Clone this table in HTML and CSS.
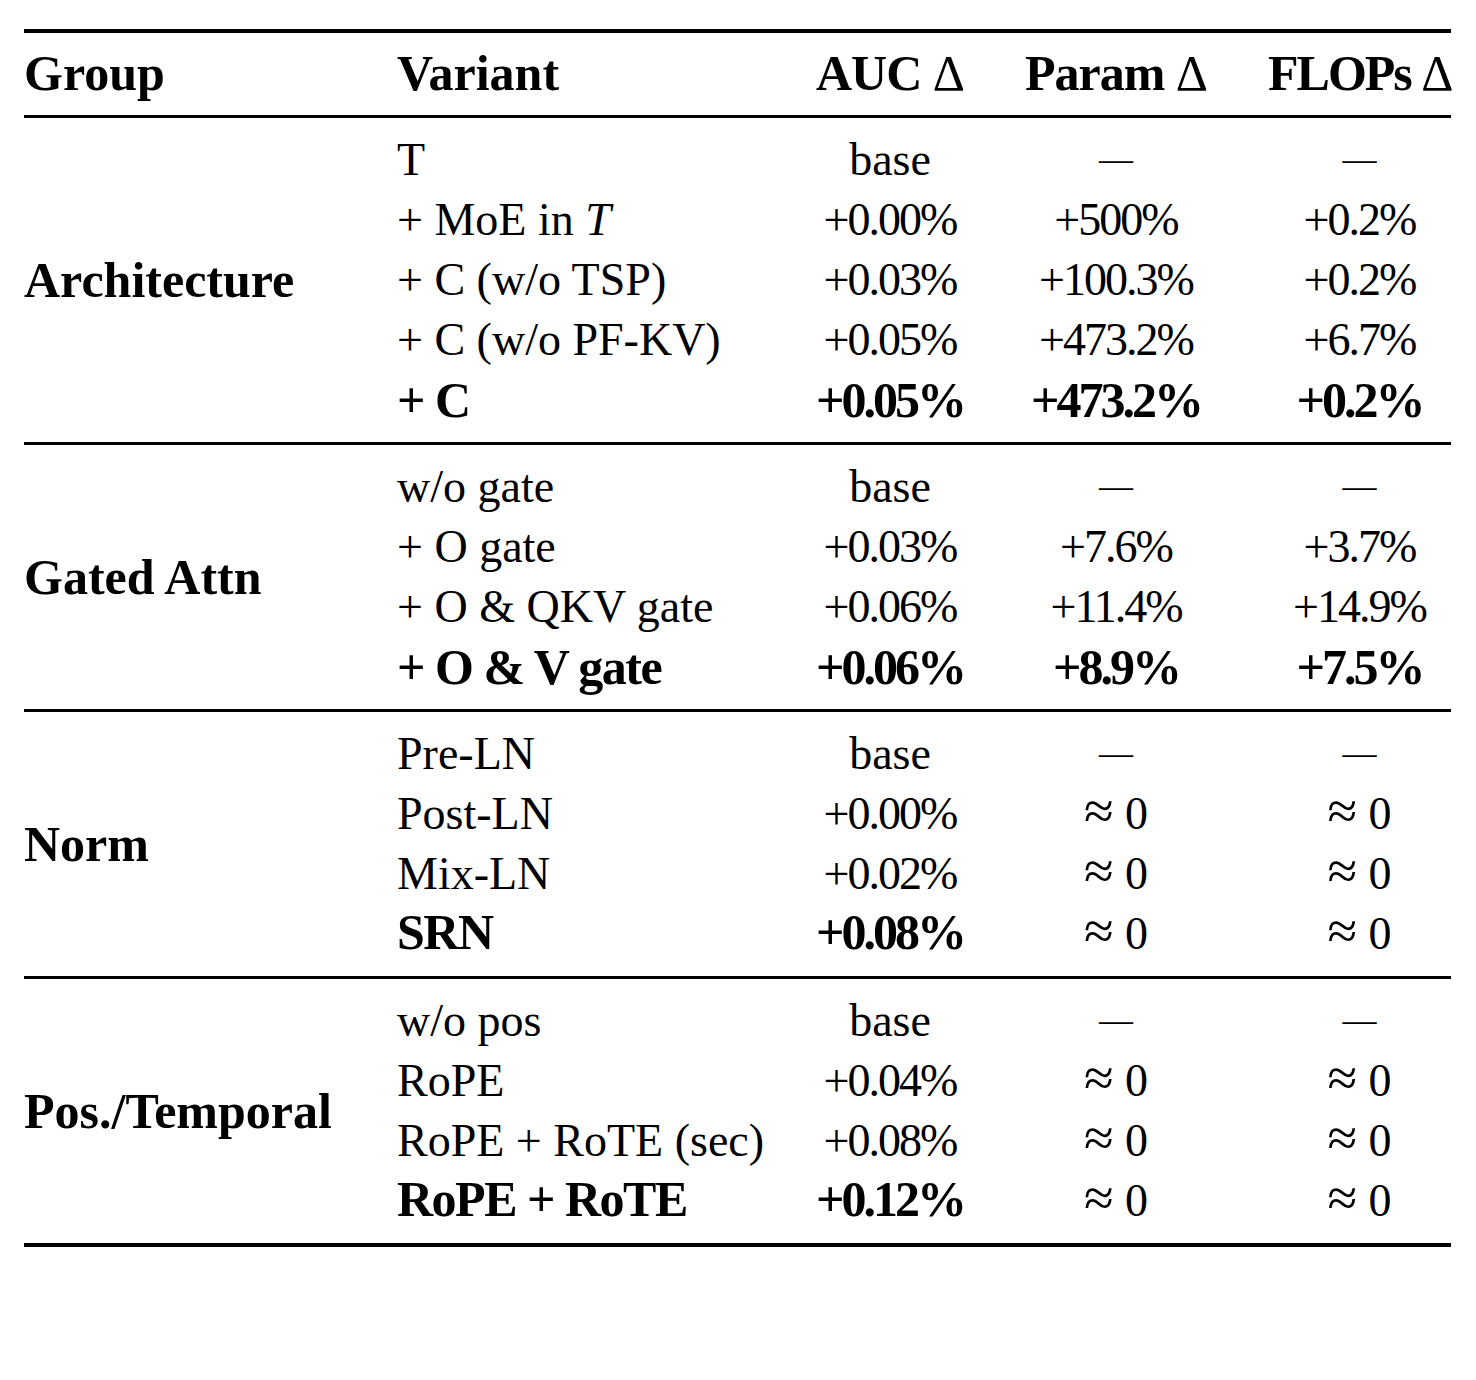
FILE: index.html
```html
<!DOCTYPE html>
<html lang="en">

<head>
  <meta charset="UTF-8">
  <meta name="viewport" content="width=device-width, initial-scale=1.0">
  <title>Ablation Table</title>
  <link rel="stylesheet" href="styles.css">
</head>

<body>
  <table class="ablation">
    <colgroup>
      <col class="col-group">
      <col class="col-variant">
      <col class="col-auc">
      <col class="col-param">
      <col class="col-flops">
    </colgroup>
    <thead>
      <tr>
        <th class="left">Group</th>
        <th class="left">Variant</th>
        <th>AUC <span class="delta">&Delta;</span></th>
        <th>Param <span class="delta">&Delta;</span></th>
        <th class="tight">FLOPs <span class="delta">&Delta;</span></th>
      </tr>
    </thead>

    <!-- Architecture -->
    <tbody>
      <tr class="first">
        <td class="group" rowspan="5">Architecture</td>
        <td class="variant">T</td>
        <td>base</td>
        <td><span class="dash">&mdash;</span></td>
        <td><span class="dash">&mdash;</span></td>
      </tr>
      <tr>
        <td class="variant">+ MoE in <i>T</i></td>
        <td class="num">+0.00%</td>
        <td class="num">+500%</td>
        <td class="num">+0.2%</td>
      </tr>
      <tr>
        <td class="variant">+ C (w/o TSP)</td>
        <td class="num">+0.03%</td>
        <td class="num">+100.3%</td>
        <td class="num">+0.2%</td>
      </tr>
      <tr>
        <td class="variant">+ C (w/o PF-KV)</td>
        <td class="num">+0.05%</td>
        <td class="num">+473.2%</td>
        <td class="num">+6.7%</td>
      </tr>
      <tr class="last best">
        <td class="variant">+ C</td>
        <td class="num">+0.05%</td>
        <td class="num">+473.2%</td>
        <td class="num">+0.2%</td>
      </tr>
    </tbody>

    <!-- Gated attention -->
    <tbody>
      <tr class="first">
        <td class="group" rowspan="4">Gated Attn</td>
        <td class="variant">w/o gate</td>
        <td>base</td>
        <td><span class="dash">&mdash;</span></td>
        <td><span class="dash">&mdash;</span></td>
      </tr>
      <tr>
        <td class="variant">+ O gate</td>
        <td class="num">+0.03%</td>
        <td class="num">+7.6%</td>
        <td class="num">+3.7%</td>
      </tr>
      <tr>
        <td class="variant">+ O &amp; QKV gate</td>
        <td class="num">+0.06%</td>
        <td class="num">+11.4%</td>
        <td class="num">+14.9%</td>
      </tr>
      <tr class="last best">
        <td class="variant">+ O &amp; V gate</td>
        <td class="num">+0.06%</td>
        <td class="num">+8.9%</td>
        <td class="num">+7.5%</td>
      </tr>
    </tbody>

    <!-- Normalization -->
    <tbody>
      <tr class="first">
        <td class="group" rowspan="4">Norm</td>
        <td class="variant">Pre-LN</td>
        <td>base</td>
        <td><span class="dash">&mdash;</span></td>
        <td><span class="dash">&mdash;</span></td>
      </tr>
      <tr>
        <td class="variant">Post-LN</td>
        <td class="num">+0.00%</td>
        <td><span class="approx">&asymp;</span> 0</td>
        <td><span class="approx">&asymp;</span> 0</td>
      </tr>
      <tr>
        <td class="variant">Mix-LN</td>
        <td class="num">+0.02%</td>
        <td><span class="approx">&asymp;</span> 0</td>
        <td><span class="approx">&asymp;</span> 0</td>
      </tr>
      <tr class="last">
        <td class="variant strong">SRN</td>
        <td class="num strong">+0.08%</td>
        <td><span class="approx">&asymp;</span> 0</td>
        <td><span class="approx">&asymp;</span> 0</td>
      </tr>
    </tbody>

    <!-- Positional / temporal -->
    <tbody class="closing">
      <tr class="first">
        <td class="group" rowspan="4">Pos./Temporal</td>
        <td class="variant">w/o pos</td>
        <td>base</td>
        <td><span class="dash">&mdash;</span></td>
        <td><span class="dash">&mdash;</span></td>
      </tr>
      <tr>
        <td class="variant">RoPE</td>
        <td class="num">+0.04%</td>
        <td><span class="approx">&asymp;</span> 0</td>
        <td><span class="approx">&asymp;</span> 0</td>
      </tr>
      <tr>
        <td class="variant">RoPE + RoTE (sec)</td>
        <td class="num">+0.08%</td>
        <td><span class="approx">&asymp;</span> 0</td>
        <td><span class="approx">&asymp;</span> 0</td>
      </tr>
      <tr class="last">
        <td class="variant strong">RoPE + RoTE</td>
        <td class="num strong">+0.12%</td>
        <td><span class="approx">&asymp;</span> 0</td>
        <td><span class="approx">&asymp;</span> 0</td>
      </tr>
    </tbody>
  </table>
</body>

</html>
```

FILE: styles.css
```css
body {
  margin: 0;
  background-color: #fff;
  color: #000;
  font-family: "Liberation Serif", "Times New Roman", serif;
}

.ablation {
  table-layout: fixed;
  width: 1427px;
  margin: 29px 0 0 24px;
  border-collapse: collapse;
}

.col-group { width: 373px; }
.col-variant { width: 419px; }
.col-auc { width: 148px; }
.col-param { width: 304px; }
.col-flops { width: 183px; }

.ablation thead {
  border-top: 4px solid #000;
  border-bottom: 3px solid #000;
}

.ablation th {
  font-size: 50px;
  font-weight: 700;
  line-height: 60px;
  letter-spacing: -1px;
  text-align: center;
  padding: 10px 0 12px 0;
  white-space: nowrap;
}

.ablation th.left {
  text-align: left;
  letter-spacing: 0;
}

.ablation th.tight {
  letter-spacing: -2px;
}

.delta {
  font-weight: 400;
}

.ablation tbody {
  border-bottom: 3px solid #000;
}

.ablation tbody.closing {
  border-bottom: 4px solid #000;
}

.ablation td {
  font-size: 46px;
  line-height: 60px;
  text-align: center;
  vertical-align: baseline;
  padding: 0;
  white-space: nowrap;
}

.ablation td.num {
  letter-spacing: -2px;
}

.ablation tr.first td {
  padding-top: 12px;
}

.ablation tr.last td {
  padding-bottom: 12px;
}

.ablation td.variant {
  text-align: left;
}

.ablation tr.first td.group {
  font-size: 50px;
  font-weight: 700;
  line-height: 57px;
  text-align: left;
  vertical-align: middle;
  padding: 0;
}

/* whole row bold: keep the 60px pitch */
.ablation tr.best td {
  font-size: 50px;
  font-weight: 700;
  line-height: 60px;
}

/* bold cell beside regular ones: shorter line so the row stays 60px */
.ablation td.strong {
  font-size: 50px;
  font-weight: 700;
  line-height: 57px;
}

.ablation tr.best td.variant,
.ablation td.variant.strong {
  letter-spacing: -1.5px;
}

.ablation tr.best td.num,
.ablation td.num.strong {
  letter-spacing: -3px;
}

.dash {
  font-size: 34px;
  line-height: 0;
  position: relative;
  top: -5px;
}

.approx {
  font-size: 54px;
  line-height: 0;
}
```
